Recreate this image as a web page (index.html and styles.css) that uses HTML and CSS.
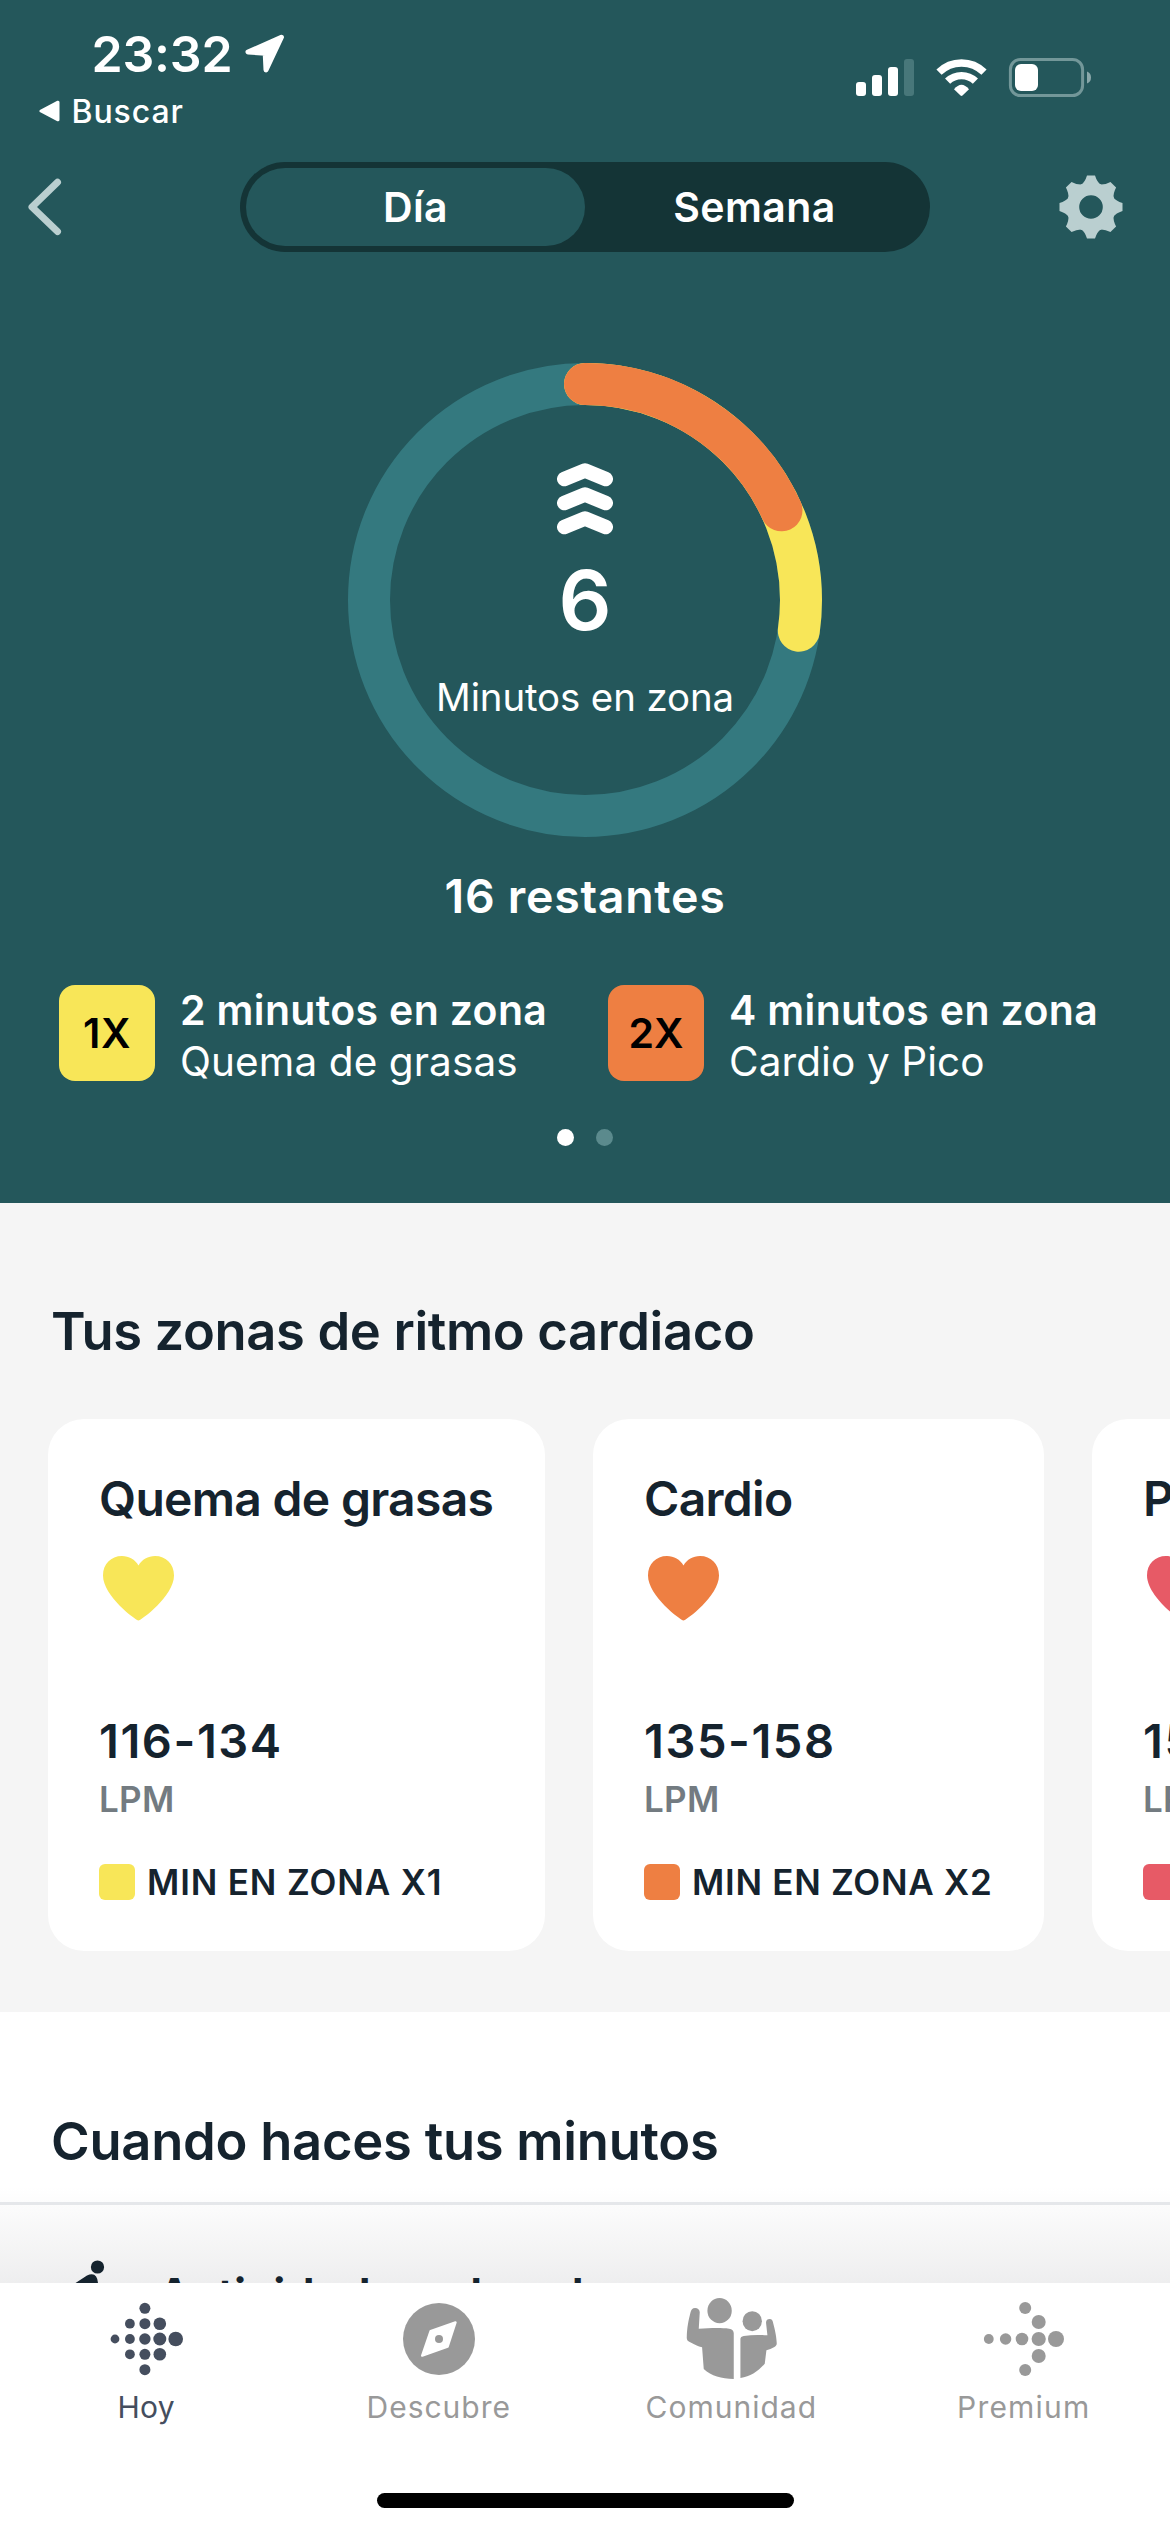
FILE: index.html
```
<!DOCTYPE html>
<html lang="es">
<head>
<meta charset="utf-8">
<title>Minutos en zona</title>
<link rel="stylesheet" href="styles.css">
</head>
<body>
<div class="scroll">
  <header class="hero">
    <div class="status">
      <div class="status-left">
        <div class="clock">
          <span class="time">23:32</span>
          <svg class="location" width="40" height="40" viewBox="0 0 40 40"><path d="M36.4 3.2 3 18.1 20.2 19.2 21 36Z" fill="#fff" stroke="#fff" stroke-width="5" stroke-linejoin="round"/></svg>
        </div>
        <div class="return">
          <svg width="22" height="22" viewBox="0 0 22 22"><path d="M2 11 19 2.2V19.8Z" fill="#fff" stroke="#fff" stroke-width="3" stroke-linejoin="round"/></svg>
          <span>Buscar</span>
        </div>
      </div>
      <div class="status-right">
        <svg width="236" height="40" viewBox="855 58 236 40" fill="#fff">
          <rect x="856" y="82" width="10" height="14" rx="3"/>
          <rect x="872" y="75" width="10" height="21" rx="3"/>
          <rect x="888" y="67" width="10" height="29" rx="3"/>
          <rect x="904" y="59" width="10" height="37" rx="3" fill="#48777a"/>
          <path d="M939 72.2A32 32 0 0 1 984 72.2" fill="none" stroke="#fff" stroke-width="7.4"/>
          <path d="M947.6 81.2A20 20 0 0 1 975.4 81.2" fill="none" stroke="#fff" stroke-width="7.4"/>
          <path d="M954 89.2Q961.5 80.2 969 89.2L962.5 95.6Q961.5 96.4 960.5 95.6Z"/>
          <rect x="1010.4" y="59.5" width="72.2" height="36" rx="10" fill="none" stroke="#739799" stroke-width="3"/>
          <rect x="1015" y="64" width="23" height="27" rx="6"/>
          <path d="M1087 71.5Q1091 73 1091 77.5T1087 83.5Z" fill="#8aa8aa"/>
        </svg>
      </div>
    </div>

    <nav class="topbar">
      <svg class="back" width="34" height="58" viewBox="0 0 34 58"><path d="M29.5 4.2 4 29 29.5 53.5" fill="none" stroke="#bacfd0" stroke-width="7" stroke-linecap="round" stroke-linejoin="round"/></svg>
      <div class="segmented">
        <span class="segment selected">Día</span>
        <span class="segment">Semana</span>
      </div>
      <svg class="gear" width="64" height="64" viewBox="-32 -32 64 64" fill="#bacfd0">
        <defs><path id="tooth" d="M-4 -31.5H4Q6 -25 10 -22H-10Q-6 -25 -4 -31.5Z"/></defs>
        <circle r="18.2" fill="none" stroke="#bacfd0" stroke-width="12.8"/>
        <use href="#tooth"/><use href="#tooth" transform="rotate(45)"/><use href="#tooth" transform="rotate(90)"/><use href="#tooth" transform="rotate(135)"/><use href="#tooth" transform="rotate(180)"/><use href="#tooth" transform="rotate(225)"/><use href="#tooth" transform="rotate(270)"/><use href="#tooth" transform="rotate(315)"/>
      </svg>
    </nav>

    <section class="ring">
      <svg class="ring-dial" width="474" height="474" viewBox="-237 -237 474 474" fill="none" stroke-width="42">
        <circle r="216" stroke="#34797f"/>
        <g transform="rotate(-90)" stroke-linecap="round">
          <circle r="216" stroke="#f8e658" pathLength="22" stroke-dasharray="6 22"/>
          <circle r="216" stroke="#ee7f42" pathLength="22" stroke-dasharray="4 22"/>
        </g>
      </svg>
      <div class="ring-content">
        <svg width="56" height="73" viewBox="0 0 56 73" fill="none" stroke="#fff" stroke-width="14.6" stroke-linecap="round" stroke-linejoin="round">
          <path d="M7.3 17 28 8.6 48.7 17"/><path d="M7.3 41 28 32.6 48.7 41"/><path d="M7.3 65 28 56.6 48.7 65"/>
        </svg>
        <span class="ring-value">6</span>
        <span class="ring-label">Minutos en zona</span>
      </div>
    </section>
    <p class="remaining">16 restantes</p>

    <div class="breakdown">
      <div class="multiplier">
        <span class="badge fat-burn one">1X</span>
        <div><p class="minutes">2 minutos en zona</p><p class="zone-name">Quema de grasas</p></div>
      </div>
      <div class="multiplier">
        <span class="badge cardio">2X</span>
        <div><p class="minutes">4 minutos en zona</p><p class="zone-name">Cardio y Pico</p></div>
      </div>
    </div>
    <div class="pager"><i class="dot current"></i><i class="dot"></i></div>
  </header>

  <section class="zones">
    <h2 class="heading zones-heading">Tus zonas de ritmo cardiaco</h2>
    <div class="cards">
      <article class="card wide">
        <h3>Quema de grasas</h3>
        <svg class="heart" width="71" height="65" viewBox="0 0 71 65"><path d="M35.5 64.5C33 64.500 0 40 0 19.500C0 8 8 0 19 0C26 0 32 3.500 35.500 9.500C39 3.500 45 0 52 0C63 0 71 8 71 19.500C71 40 38 64.500 35.500 64.500Z" fill="#f8e658"/></svg>
        <p class="range">116-134</p>
        <p class="unit">LPM</p>
        <p class="rate"><i class="swatch fat-burn"></i><span class="rate-text first">MIN EN ZONA X1</span></p>
      </article>
      <article class="card">
        <h3>Cardio</h3>
        <svg class="heart" width="71" height="65" viewBox="0 0 71 65"><path d="M35.5 64.5C33 64.500 0 40 0 19.500C0 8 8 0 19 0C26 0 32 3.500 35.500 9.500C39 3.500 45 0 52 0C63 0 71 8 71 19.500C71 40 38 64.500 35.500 64.500Z" fill="#ee7f42"/></svg>
        <p class="range">135-158</p>
        <p class="unit">LPM</p>
        <p class="rate"><i class="swatch cardio"></i><span class="rate-text">MIN EN ZONA X2</span></p>
      </article>
      <article class="card">
        <h3>Pico</h3>
        <svg class="heart" width="71" height="65" viewBox="0 0 71 65"><path d="M35.5 64.5C33 64.500 0 40 0 19.500C0 8 8 0 19 0C26 0 32 3.500 35.500 9.500C39 3.500 45 0 52 0C63 0 71 8 71 19.500C71 40 38 64.500 35.500 64.500Z" fill="#e75a66"/></svg>
        <p class="range">159-220</p>
        <p class="unit">LPM</p>
        <p class="rate"><i class="swatch peak"></i><span class="rate-text">MIN EN ZONA X2</span></p>
      </article>
    </div>
  </section>

  <section class="when">
    <h2 class="heading when-heading">Cuando haces tus minutos</h2>
    <div class="activity">
      <svg width="50" height="70" viewBox="0 0 50 70" fill="#15232e"><circle cx="35.500" cy="7" r="6.600"/><path d="M12 24 25 15.500Q35 11 36 23L34 44 22 62 14 58 22 40V26Z"/></svg>
      <span>Actividad moderada</span>
    </div>
  </section>
</div>

<nav class="tabs">
  <div class="tab active">
    <svg width="94" height="90" viewBox="-47 -45 94 90" fill="#454e5e">
      <circle cx="-31" r="4.400"/>
      <circle cx="-16.100" cy="-15.300" r="4.900"/><circle cx="-16.100" r="4.900"/><circle cx="-16.100" cy="15.300" r="4.900"/>
      <circle cx="-1.100" cy="-30.700" r="5.500"/><circle cx="-1.100" cy="-15.300" r="5.500"/><circle cx="-1.100" r="5.700"/><circle cx="-1.100" cy="15.300" r="5.500"/><circle cx="-1.100" cy="30.700" r="5.500"/>
      <circle cx="13.800" cy="-15.300" r="6.300"/><circle cx="13.800" r="6.500"/><circle cx="13.800" cy="15.300" r="6.300"/>
      <circle cx="29.700" r="7.300"/>
    </svg>
    <span class="hoy">Hoy</span>
  </div>
  <div class="tab">
    <svg width="94" height="90" viewBox="-47 -45 94 90">
      <circle r="36" fill="#999"/>
      <path d="M16.500 -16.600 8.600 7.600 -16.800 16.600 -8.400 -7.800Z" fill="#fff" stroke="#fff" stroke-width="2.400" stroke-linejoin="round"/>
      <circle r="4" fill="#999"/>
    </svg>
    <span class="descubre">Descubre</span>
  </div>
  <div class="tab">
    <svg width="94" height="90" viewBox="72.750 72 282 270" fill="#999">
      <ellipse cx="179.500" cy="122" rx="36.500" ry="38"/>
      <ellipse cx="277.500" cy="153.500" rx="29" ry="30"/>
      <path d="M106 114C98 114 94 119 92 128C86 152 82 170 81 203C81 210 84 213 90 216C104 224 115 229 127 232L132 297C155 318 185 326 222 327V190Q222 178 208 176C185 173 150 174 117 176L120 127C120 119 114 114 106 114Z"/>
      <path d="M242 324V207Q242 200 252 198C275 194 300 194 323 196L319 160C318 151 323 147 330 147C336 147 339 152 340 158C347 185 350 200 351 220C351 225 349 228 344 231Q332 238 320 241L315 281C295 304 272 320 242 324Z"/>
    </svg>
    <span class="comunidad">Comunidad</span>
  </div>
  <div class="tab">
    <svg width="94" height="90" viewBox="-47 -45 94 90" fill="#999">
      <circle cx="-35.200" r="4.900"/><circle cx="-18.400" r="5.700"/><circle cx="-2" r="6.300"/><circle cx="14.700" r="7.100"/><circle cx="32" r="8"/>
      <circle cx="14.700" cy="-17" r="7"/><circle cx="14.700" cy="17" r="7"/>
      <circle cx="1.200" cy="-31" r="6"/><circle cx="1.200" cy="31" r="6"/>
    </svg>
    <span class="premium">Premium</span>
  </div>
  <i class="home-indicator"></i>
</nav>
</body>
</html>
```
FILE: styles.css
```
* { box-sizing: border-box; }
body, h2, h3, p { margin: 0; }
body {
  width: 1170px;
  height: 2532px;
  overflow: hidden;
  background: #fff;
  color: #15232e;
  font-family: Inter, "Liberation Sans", sans-serif;
  font-weight: 600;
  white-space: nowrap;
}
svg { display: block; flex: none; }
.scroll { height: 2283px; overflow: hidden; }

/* Header with status bar, day/week switch and progress ring */
.hero { height: 1203px; background: #24575b; color: #fff; }
.status { display: flex; justify-content: space-between; height: 162px; padding: 24px 79px 0 39px; }
.clock { display: flex; align-items: center; height: 60px; padding-left: 52.5px; }
.time { width: 153.5px; font-size: 50px; letter-spacing: -0.2px; }
.return { display: flex; align-items: center; gap: 10.5px; height: 40px; margin-top: 7px; font-size: 32px; font-weight: 450; letter-spacing: 0.9px; }
.status-right { padding-top: 34px; }
.topbar { display: grid; grid-template-columns: 240px 690px 240px; align-items: center; height: 90px; }
.back { margin-left: 28px; }
.gear { margin-left: 128.500px; }
.segmented { display: grid; grid-template-columns: 1fr 1fr; height: 90px; padding: 6px; border-radius: 45px; background: #143436; }
.segment { display: grid; place-items: center; font-size: 41px; letter-spacing: 0.4px; border-radius: 39px; }
.segment.selected { background: #24575b; }

.ring { display: grid; width: 474px; margin: 111px auto 0; }
.ring-dial, .ring-content { grid-area: 1 / 1; }
.ring-content { display: flex; flex-direction: column; align-items: center; padding-top: 99px; }
.ring-value { margin-top: 25px; font-size: 83px; line-height: 80px; }
.ring-label { margin-top: 32px; font-size: 38.400px; font-weight: 400; line-height: 50px; letter-spacing: -0.1px; }
.remaining { margin-top: 29px; text-align: center; font-size: 46.500px; line-height: 60px; letter-spacing: 0.700px; }

.breakdown { display: grid; grid-template-columns: 549px 549px; height: 102px; margin-top: 59px; padding-left: 59px; }
.multiplier { display: flex; gap: 25px; }
.badge { display: grid; place-items: center; width: 96px; height: 96px; border-radius: 16px; color: #000; font-size: 41px; font-weight: 600; }
.badge.one { letter-spacing: 0.5px; }
.minutes { font-size: 41px; line-height: 51px; letter-spacing: 0.350px; }
.zone-name { font-size: 40.500px; font-weight: 400; line-height: 51px; letter-spacing: 0.100px; }
.pager { display: flex; justify-content: center; gap: 22px; margin-top: 42px; }
.dot { width: 17px; height: 17px; border-radius: 50%; background: #5b8a8d; }
.dot.current { background: #fff; }

.fat-burn { background: #f8e658; }
.cardio { background: #ee7f42; }
.peak { background: #e75a66; }

/* Heart rate zones */
.heading { padding-left: 51px; font-size: 52.500px; font-weight: 600; line-height: 70px; }
.zones { height: 809px; padding-top: 93px; background: #f5f5f5; }
.zones-heading { letter-spacing: -0.360px; }
.cards { display: flex; gap: 48px; margin-top: 53px; padding-left: 48px; }
.card { flex: none; width: 451px; height: 532px; padding: 50px 0 0 51px; border-radius: 36px; background: #fff; }
.card.wide { width: 497px; }
.card h3 { font-size: 48px; font-weight: 600; line-height: 60px; letter-spacing: -0.700px; }
.heart { margin: 27px 0 0 4px; }
.range { margin-top: 90px; font-size: 47px; line-height: 60px; letter-spacing: 1.550px; }
.unit { margin-top: 8px; color: #737b81; font-size: 35px; font-weight: 600; line-height: 40px; letter-spacing: 0.300px; }
.rate { display: flex; align-items: center; gap: 12px; height: 36px; margin-top: 45px; font-size: 35px; letter-spacing: 0.720px; }
.rate-text.first { letter-spacing: 0.860px; }
.swatch { width: 36px; height: 36px; border-radius: 6px; }

/* Activity list, partly hidden behind the tab bar */
.when { height: 271px; padding-top: 94px; background: linear-gradient(#fff 175px, #eeeeef 271px); }
.when-heading { letter-spacing: -0.260px; }
.activity { display: flex; align-items: flex-start; gap: 45px; height: 120px; margin-top: 26px; padding: 55px 0 0 62px; border-top: 3px solid #e5e7ea; font-size: 48px; line-height: 71px; letter-spacing: -0.750px; }

/* Tab bar */
.tabs { display: grid; grid-template-columns: repeat(4, 1fr); grid-template-rows: 210px 15px; height: 249px; background: #fff; color: #999; }
.tab { display: flex; flex-direction: column; align-items: center; padding-top: 11px; font-size: 30px; font-weight: 400; line-height: 40px; letter-spacing: 1px; }
.tab span { margin-top: 3px; }
.tab.active { color: #454e5e; }
.tab .hoy { letter-spacing: 0.350px; }
.tab .premium { letter-spacing: 1.200px; }
.home-indicator { grid-column: 1 / -1; justify-self: center; width: 417px; border-radius: 8px; background: #000; }
```
